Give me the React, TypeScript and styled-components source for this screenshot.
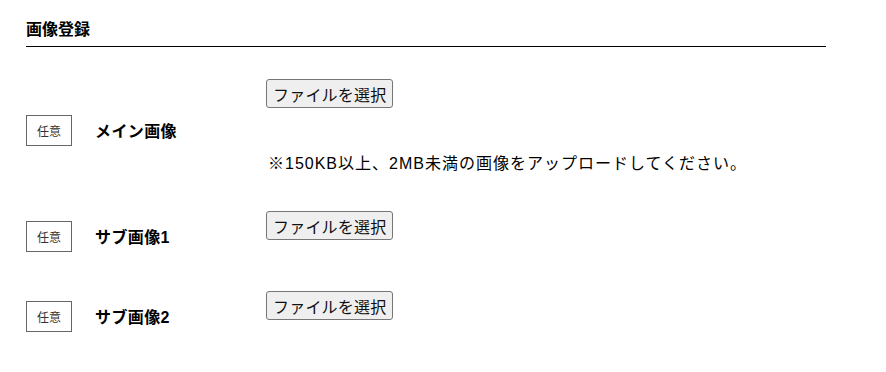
import styled, { createGlobalStyle } from "styled-components";

const Global = createGlobalStyle`
  body {
    margin: 0;
    background: #fff;
    font-family: "Liberation Sans", "Noto Sans CJK JP", sans-serif;
    color: #000;
  }
`;

const Wrap = styled.section`
  width: 800px;
  padding: 18px 26px;
`;

const Title = styled.h2`
  margin: 0 0 32px;
  padding-bottom: 4px;
  font-size: 16px;
  line-height: 24px;
  font-weight: 700;
  border-bottom: 1px solid #000;
`;

const List = styled.div`
  display: flex;
  flex-direction: column;
  gap: 30px;
`;

const Row = styled.div`
  display: flex;
  align-items: center;
`;

const Head = styled.div`
  width: 240px;
  display: flex;
  align-items: center;
  gap: 23px;
`;

const Badge = styled.span`
  width: 46px;
  height: 31px;
  box-sizing: border-box;
  border: 1px solid #666;
  display: flex;
  align-items: center;
  justify-content: center;
  font-size: 12px;
  color: #333;
`;

const Label = styled.span`
  font-size: 16px;
  font-weight: 700;
  letter-spacing: 0.4px;
`;

const Field = styled.div<{ $pad: boolean }>`
  display: flex;
  flex-direction: column;
  align-items: flex-start;
  padding-bottom: ${(p) => (p.$pad ? "21px" : "0")};
`;

const FileButton = styled.button`
  font-family: "Noto Sans CJK JP", sans-serif;
  font-size: 16px;
  letter-spacing: 0.2px;
  white-space: nowrap;
  height: 29px;
  padding: 0 6px;
  color: #111;
  background: #efefef;
  border: 1px solid #767676;
  border-radius: 3px;
`;

const Note = styled.p`
  margin: 44px 0 5px 2px;
  font-size: 16px;
  line-height: 24px;
  letter-spacing: 1px;
`;

const items = [
  { label: "メイン画像", note: "※150KB以上、2MB未満の画像をアップロードしてください。" },
  { label: "サブ画像1" },
  { label: "サブ画像2" },
];

export default function App() {
  return (
    <>
      <Global />
      <Wrap>
        <Title>画像登録</Title>
        <List>
          {items.map((it) => (
            <Row key={it.label}>
              <Head>
                <Badge>任意</Badge>
                <Label>{it.label}</Label>
              </Head>
              <Field $pad={!it.note}>
                <FileButton type="button">ファイルを選択</FileButton>
                {it.note && <Note>{it.note}</Note>}
              </Field>
            </Row>
          ))}
        </List>
      </Wrap>
    </>
  );
}
